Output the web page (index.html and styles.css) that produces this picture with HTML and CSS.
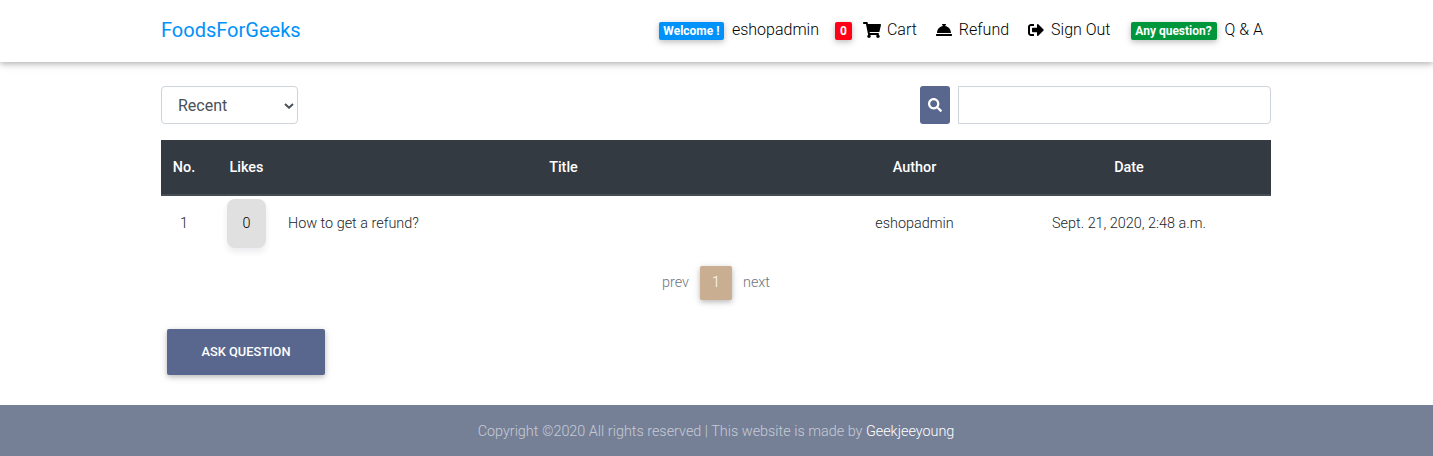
FILE: index.html
```html
<!DOCTYPE html>
<html lang="en">
<head>
<meta charset="utf-8">
<title>FoodsForGeeks</title>
<link rel="stylesheet" href="styles.css">
</head>
<body>
<header class="navbar">
  <div class="container navbar-inner">
    <a class="brand">FoodsForGeeks</a>
    <nav class="nav">
      <a class="nav-item user"><span class="badge blue">Welcome !</span><span>eshopadmin</span></a>
      <a class="nav-item cart"><span class="badge red">0</span><svg class="icon icon-cart" viewBox="0 0 576 512"><path d="M528.12 301.319l47.273-208C578.806 78.301 567.391 64 551.99 64H159.208l-9.166-44.81C147.758 8.021 137.93 0 126.529 0H24C10.745 0 0 10.745 0 24v16c0 13.255 10.745 24 24 24h69.883l70.248 343.435C147.325 417.1 136 435.222 136 456c0 30.928 25.072 56 56 56s56-25.072 56-56c0-15.674-6.447-29.835-16.824-40h209.647C430.447 426.165 424 440.326 424 456c0 30.928 25.072 56 56 56s56-25.072 56-56c0-22.172-12.888-41.332-31.579-50.405l5.517-24.276c3.413-15.018-8.002-29.319-23.403-29.319H218.117l-6.545-32h293.145c11.206 0 20.92-7.754 23.403-18.681z"/></svg><span>Cart</span></a>
      <a class="nav-item refund"><svg class="icon" viewBox="0 0 512 512"><path d="M288 130.540V112h16c8.840 0 16-7.160 16-16V80c0-8.840-7.160-16-16-16h-96c-8.840 0-16 7.160-16 16v16c0 8.840 7.160 16 16 16h16v18.540C115.490 146.110 32 239.180 32 352h448c0-112.820-83.490-205.890-192-221.460zM496 384H16c-8.840 0-16 7.160-16 16v32c0 8.840 7.160 16 16 16h480c8.840 0 16-7.160 16-16v-32c0-8.840-7.160-16-16-16z"/></svg><span>Refund</span></a>
      <a class="nav-item signout"><svg class="icon" viewBox="0 0 512 512"><path d="M497 273L329 441c-15 15-41 4.500-41-17v-96H152c-13.300 0-24-10.700-24-24v-96c0-13.300 10.700-24 24-24h136V88c0-21.400 25.900-32 41-17l168 168c9.300 9.400 9.300 24.600 0 34zM192 436v-40c0-6.600-5.400-12-12-12H96c-17.700 0-32-14.300-32-32V160c0-17.700 14.300-32 32-32h84c6.600 0 12-5.400 12-12V76c0-6.600-5.400-12-12-12H96c-53 0-96 43-96 96v192c0 53 43 96 96 96h84c6.600 0 12-5.400 12-12z"/></svg><span>Sign Out</span></a>
      <a class="nav-item qna"><span class="badge green">Any question?</span><span>Q &amp; A</span></a>
    </nav>
  </div>
</header>

<main class="container">
  <div class="toolbar">
    <div class="select"><span>Recent</span><svg class="chevron" viewBox="0 0 10 6"><path d="M1 1l4 3.700L9 1"/></svg></div>
    <form class="search">
      <button class="search-btn" type="button" aria-label="Search"><svg class="icon-search" viewBox="0 0 512 512"><path d="M505 442.700L405.300 343c-4.500-4.500-10.600-7-17-7H372c27.600-35.300 44-79.700 44-128C416 93.100 322.900 0 208 0S0 93.100 0 208s93.100 208 208 208c48.300 0 92.700-16.400 128-44v16.300c0 6.400 2.500 12.500 7 17l99.700 99.700c9.400 9.400 24.600 9.400 33.900 0l28.300-28.300c9.400-9.400 9.400-24.600.1-34zM208 336c-70.700 0-128-57.200-128-128 0-70.700 57.200-128 128-128 70.700 0 128 57.200 128 128 0 70.700-57.200 128-128 128z"/></svg></button>
      <input class="search-input" type="text" aria-label="Search text">
    </form>
  </div>

  <table class="board">
    <colgroup><col class="c-no"><col class="c-likes"><col class="c-title"><col class="c-author"><col class="c-date"></colgroup>
    <thead>
      <tr><th>No.</th><th>Likes</th><th>Title</th><th>Author</th><th>Date</th></tr>
    </thead>
    <tbody>
      <tr><td>1</td><td><span class="likes">0</span></td><td class="title">How to get a refund?</td><td>eshopadmin</td><td>Sept. 21, 2020, 2:48 a.m.</td></tr>
    </tbody>
  </table>

  <div class="pagination">
    <span class="page">prev</span><span class="page active">1</span><span class="page">next</span>
  </div>

  <button class="ask" type="button">ASK QUESTION</button>
</main>

<footer class="footer">Copyright ©2020 All rights reserved | This website is made by <a class="author-link">Geekjeeyoung</a></footer>
</body>
</html>
```
FILE: styles.css
```css
* { box-sizing: border-box; }

body {
  margin: 0;
  min-height: 456px;
  display: flex;
  flex-direction: column;
  overflow: hidden;
  background: #fff;
  color: #212529;
  font: 300 16px/24px Roboto, sans-serif;
}

.container { width: 1110px; margin-left: 161px; }

.navbar {
  height: 62px;
  box-shadow: 0 2px 5px rgba(0, 0, 0, .2), 0 2px 10px rgba(0, 0, 0, .12);
}
.navbar-inner {
  height: 60px;
  display: flex;
  align-items: center;
  justify-content: space-between;
}
.brand { color: #0092fb; font-size: 20px; font-weight: 400; line-height: 30px; }
.nav { display: flex; color: #000; padding-right: 8px; }
.nav-item { display: flex; align-items: center; white-space: nowrap; }
.user { gap: 8px; margin-right: 16px; }
.cart { margin-right: 19px; }
.cart .badge { margin-right: 11px; }
.cart .icon-cart { margin-right: 6px; }
.refund { gap: 7px; margin-right: 19px; }
.signout { gap: 7px; margin-right: 20px; }
.qna { gap: 8px; }
.icon { width: 16px; height: 16px; fill: currentColor; }
.icon-cart { width: 18px; }

.badge {
  height: 18px;
  margin-top: 2px;
  border-radius: 2px;
  color: #fff;
  font-size: 12px;
  font-weight: 700;
  line-height: 18px;
  text-align: center;
  box-shadow: 0 2px 5px rgba(0, 0, 0, .16), 0 2px 10px rgba(0, 0, 0, .12);
}
.blue { width: 65px; background: #0092fb; }
.red { width: 17px; background: #ff0016; }
.green { width: 86px; background: #00963c; }

.toolbar {
  display: flex;
  justify-content: space-between;
  margin-top: 24px;
  height: 38px;
}
.select {
  width: 137px;
  padding: 1px 3px 0 16px;
  display: flex;
  align-items: center;
  justify-content: space-between;
  border: 1px solid #ced4da;
  border-radius: 4px;
  color: #495057;
  font-weight: 400;
}
.chevron { width: 10px; height: 6px; fill: none; stroke: #495057; stroke-width: 2; }
.search { display: flex; gap: 8px; }
.search-btn {
  width: 30px;
  padding: 0;
  display: flex;
  align-items: center;
  justify-content: center;
  border: 0;
  border-radius: 3px;
  background: #59678f;
}
.icon-search { width: 14px; height: 14px; fill: #fff; }
.search-input {
  width: 313px;
  border: 1px solid #ced4da;
  border-radius: 0 4px 4px 0;
  outline: 0;
}

.board {
  width: 1110px;
  margin-top: 16px;
  table-layout: fixed;
  border-spacing: 0;
  font-size: 14.4px;
  text-align: center;
}
.c-no { width: 46px; }
.c-likes { width: 79px; }
.c-title { width: 555px; }
.c-author { width: 147px; }
.c-date { width: 283px; }
.board th {
  height: 56px;
  padding: 1px 0 0;
  background: #343a42;
  border-bottom: 2px solid #454d55;
  color: #fff;
  font-weight: 500;
}
.board td { height: 55px; padding: 0; }
.board td:last-child,
.board th:last-child { padding-right: 1px; }
.board .title { padding-left: 2px; text-align: left; }
.likes {
  display: inline-block;
  vertical-align: middle;
  width: 39px;
  height: 49px;
  border-radius: 8px;
  background: #e0e0e0;
  color: #000;
  line-height: 49px;
  box-shadow: 0 4px 6px rgba(40, 40, 80, .09);
}

.pagination {
  display: flex;
  justify-content: center;
  margin-top: 15px;
  font-size: 14.4px;
}
.page { height: 34px; padding: 0 11px; color: #6c757d; line-height: 33px; }
.page.active {
  width: 32px;
  border-radius: 2px;
  background: #c9ae91;
  color: #fff;
  text-align: center;
  box-shadow: 0 2px 5px rgba(0, 0, 0, .2), 0 2px 10px rgba(0, 0, 0, .1);
}

.ask {
  display: block;
  width: 158px;
  height: 46px;
  margin: 29px 0 30px 6px;
  padding: 0;
  border: 0;
  border-radius: 2px;
  background: #59678f;
  color: #fff;
  font: 500 12.8px/20px Roboto, sans-serif;
  box-shadow: 0 2px 5px rgba(0, 0, 0, .2), 0 2px 10px rgba(0, 0, 0, .1);
}

.footer {
  height: 51px;
  padding-right: 1px;
  background: #758097;
  color: rgba(255, 255, 255, .6);
  font-size: 14.4px;
  line-height: 53px;
  text-align: center;
}
.author-link { color: #fff; }
```
